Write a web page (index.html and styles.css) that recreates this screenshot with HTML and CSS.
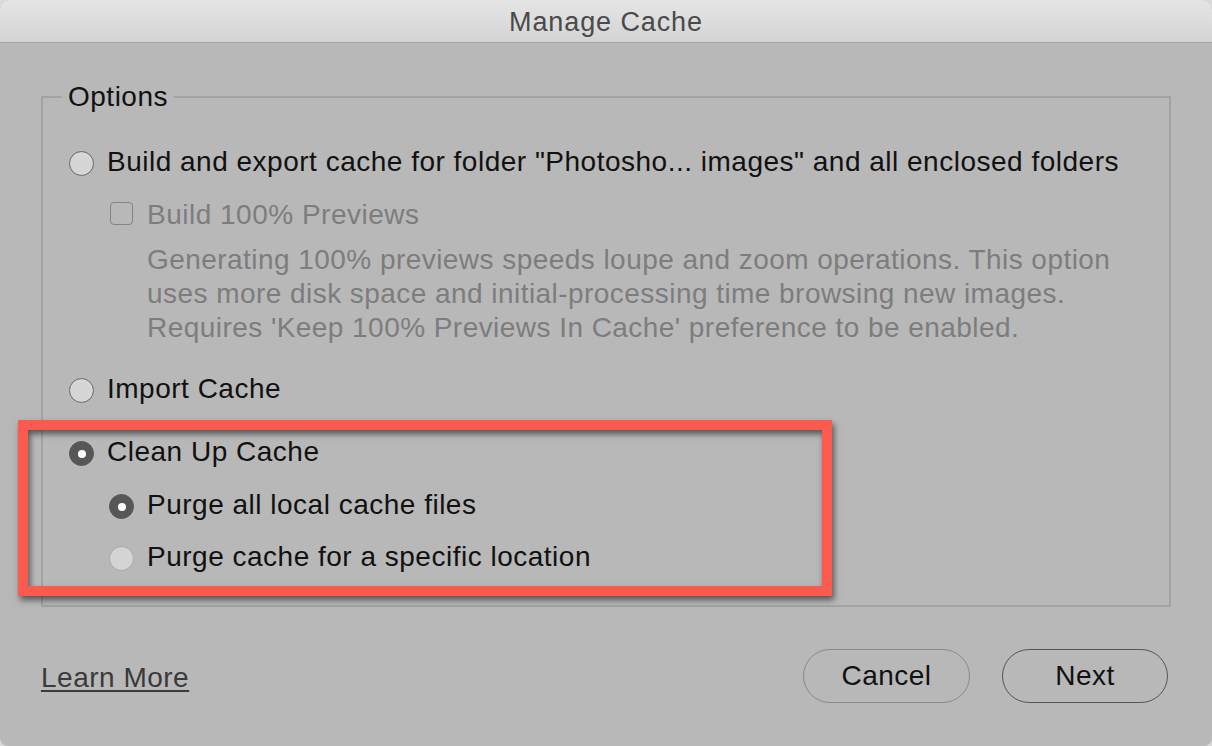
FILE: index.html
```html
<!DOCTYPE html>
<html lang="en">
<head>
<meta charset="utf-8">
<title>Manage Cache</title>
<link rel="stylesheet" href="styles.css">
</head>
<body>
<div class="window">
  <div class="titlebar">Manage Cache</div>
  <div class="content">
    <fieldset class="options">
      <legend>Options</legend>
      <div class="row row-build"><span class="radio"></span><span class="label">Build and export cache for folder "Photosho... images" and all enclosed folders</span></div>
      <div class="row row-check sub disabled"><span class="checkbox"></span><span class="label">Build 100% Previews</span></div>
      <p class="desc">Generating 100% previews speeds loupe and zoom operations. This option<br>uses more disk space and initial-processing time browsing new images.<br>Requires 'Keep 100% Previews In Cache' preference to be enabled.</p>
      <div class="row row-import"><span class="radio"></span><span class="label">Import Cache</span></div>
      <div class="row row-clean"><span class="radio on"></span><span class="label">Clean Up Cache</span></div>
      <div class="row row-purge-all sub"><span class="radio on"></span><span class="label">Purge all local cache files</span></div>
      <div class="row row-purge-loc sub"><span class="radio dim"></span><span class="label">Purge cache for a specific location</span></div>
    </fieldset>
    <div class="footer">
      <a class="learn" href="#">Learn More</a>
      <div class="buttons">
        <button class="btn btn-cancel" type="button">Cancel</button>
        <button class="btn btn-next" type="button">Next</button>
      </div>
    </div>
  </div>
  <div class="highlight"></div>
</div>
</body>
</html>
```

FILE: styles.css
```css
* { box-sizing: border-box; }

html, body {
  margin: 0;
  padding: 0;
  background: #d9d9d9;
}

body {
  font-family: "Liberation Sans", Arial, sans-serif;
  font-size: 28px;
  line-height: 34px;
  letter-spacing: 0.5px;
  color: #111;
}

.window {
  position: relative;
  width: 1212px;
  height: 746px;
  background: #b8b8b8;
  border-radius: 10px 10px 8px 8px;
  overflow: hidden;
}

.titlebar {
  height: 43px;
  border-bottom: 1px solid #a6a6a6;
  background: linear-gradient(#e5e5e5, #d4d4d4);
  text-align: center;
  font-size: 27px;
  letter-spacing: 0.9px;
  line-height: 45px;
  color: #4a4a4a;
}

.content {
  padding-top: 37px;
}

.options {
  margin: 0 41px;
  padding: 0 0 31px 0;
  border: 2px solid #a3a3a3;
  min-inline-size: 0;
}

.options legend {
  margin-left: 19px;
  padding: 0 6px;
  line-height: 34px;
  color: #111;
}

.row {
  display: flex;
  align-items: flex-start;
  height: 34px;
  white-space: nowrap;
}

.radio {
  flex: none;
  width: 25px;
  height: 25px;
  margin: 6px 13px 0 26px;
  border-radius: 50%;
  background: #d6d6d6;
  border: 1.5px solid #686868;
  position: relative;
}

.sub .radio { margin-left: 66px; }

.radio.on {
  background: #575757;
  border-color: #575757;
}

.radio.on::after {
  content: "";
  position: absolute;
  left: 50%;
  top: 50%;
  width: 8px;
  height: 8px;
  margin: -4px 0 0 -4px;
  border-radius: 50%;
  background: #fff;
}

.radio.dim {
  background: #d4d4d4;
  border-color: #a9a9a9;
}

.checkbox {
  flex: none;
  width: 23px;
  height: 23px;
  margin: 4px 14px 0 67px;
  border: 1.5px solid #858585;
  border-radius: 4px;
}

.disabled .label { color: #7d7d7d; }

.row-build { margin-top: 31px; }
.row-check { margin-top: 19px; }

.desc {
  margin: 11px 0 0 104px;
  color: #7d7d7d;
  line-height: 34px;
  letter-spacing: 0.45px;
  white-space: nowrap;
}

.row-import { margin-top: 27px; }
.row-clean { margin-top: 29px; }
.row-purge-all { margin-top: 19px; }
.row-purge-loc { margin-top: 18px; }

.footer {
  display: flex;
  justify-content: space-between;
  align-items: flex-start;
  margin-top: 42px;
  padding: 0 44px 0 41px;
}

.learn {
  margin-top: 12px;
  color: #3a3a3a;
  text-decoration: underline;
  text-underline-offset: 3px;
  text-decoration-thickness: 2px;
}

.buttons {
  display: flex;
  gap: 32px;
}

.btn {
  height: 54px;
  border-radius: 27px;
  background: transparent;
  font: inherit;
  line-height: 34px;
  letter-spacing: 0.5px;
  color: #111;
  padding: 0;
}

.btn-cancel {
  width: 167px;
  border: 1.5px solid #8a8a8a;
}

.btn-next {
  width: 166px;
  border: 1.5px solid #555;
}

.highlight {
  position: absolute;
  left: 18px;
  top: 420px;
  width: 814px;
  height: 176px;
  border: 10px solid #fb5b4e;
  filter: drop-shadow(2px 4px 3px rgba(0, 0, 0, 0.55));
  pointer-events: none;
}
```
